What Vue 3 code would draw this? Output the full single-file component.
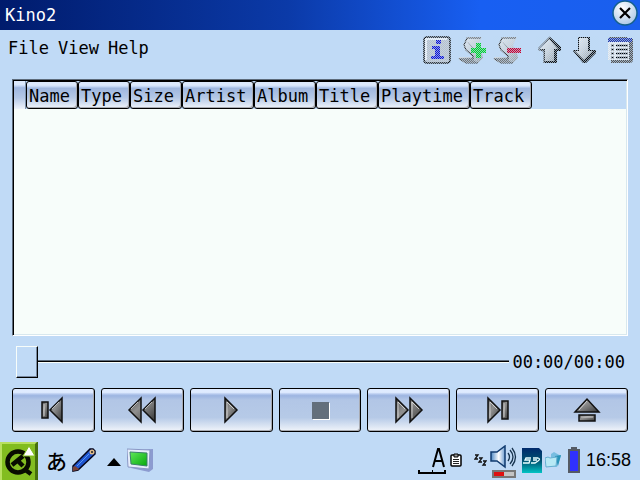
<script setup>
import { ref } from 'vue'

const menus = ['File', 'View', 'Help']
const columns = [
  { label: 'Name', size: 'short' },
  { label: 'Type', size: 'short' },
  { label: 'Size', size: 'short' },
  { label: 'Artist', size: 'long' },
  { label: 'Album', size: 'medium' },
  { label: 'Title', size: 'medium' },
  { label: 'Playtime', size: 'wide' },
  { label: 'Track', size: 'medium' }
]
const tools = [
  { id: 'info', label: 'Information' },
  { id: 'add', label: 'Add to playlist' },
  { id: 'remove', label: 'Remove from playlist' },
  { id: 'up', label: 'Move up' },
  { id: 'down', label: 'Move down' },
  { id: 'list', label: 'Playlist' }
]
const controls = [
  { id: 'prev', label: 'Previous' },
  { id: 'rewind', label: 'Rewind' },
  { id: 'play', label: 'Play' },
  { id: 'stop', label: 'Stop' },
  { id: 'forward', label: 'Fast forward' },
  { id: 'next', label: 'Next' },
  { id: 'eject', label: 'Eject' }
]
const position = ref(0)
</script>

<template>
  <div class="screen">
    <svg class="defs" width="0" height="0" aria-hidden="true">
      <defs>
        <pattern id="dither" width="2" height="2" patternUnits="userSpaceOnUse">
          <path d="M0 0h1v1h-1zM1 1h1v1h-1z" fill="#c0daf6" fill-opacity=".7" />
        </pattern>
        <linearGradient id="metal" x1="0" y1="0" x2="1" y2="1">
          <stop offset="0" stop-color="#555" />
          <stop offset=".4" stop-color="#909090" />
          <stop offset=".6" stop-color="#747474" />
          <stop offset="1" stop-color="#333" />
        </linearGradient>
        <linearGradient id="silver" x1="0" y1="0" x2="1" y2="1">
          <stop offset="0" stop-color="#f4f4f4" />
          <stop offset=".5" stop-color="#cfd2d4" />
          <stop offset="1" stop-color="#8e9294" />
        </linearGradient>
        <radialGradient id="orb" cx=".4" cy=".3" r=".75">
          <stop offset="0" stop-color="#fff" />
          <stop offset="1" stop-color="#a9c6e6" />
        </radialGradient>
        <linearGradient id="cone" x1="0" y1="0" x2="1" y2="0">
          <stop offset="0" stop-color="#4f8ac6" />
          <stop offset=".55" stop-color="#fff" />
          <stop offset="1" stop-color="#6c9cd0" />
        </linearGradient>
        <linearGradient id="card" x1="0" y1="0" x2="0" y2="1">
          <stop offset="0" stop-color="#002a6c" />
          <stop offset=".5" stop-color="#005070" />
          <stop offset=".7" stop-color="#007c90" />
          <stop offset="1" stop-color="#00c4c4" />
        </linearGradient>
        <linearGradient id="lawn" x1="0" y1="0" x2="1" y2="1">
          <stop offset="0" stop-color="#5fe85a" />
          <stop offset="1" stop-color="#06a80c" />
        </linearGradient>
      </defs>
    </svg>

    <header class="titlebar">
      <h1>Kino2</h1>
      <button class="close" aria-label="Close">
        <svg width="26" height="26" viewBox="0 0 26 26">
          <circle cx="13" cy="13" r="12" fill="url(#orb)" stroke="#15608c" stroke-width="1.5" />
          <path d="M8 8l10 10M18 8L8 18" stroke="#000" stroke-width="2.2" />
        </svg>
      </button>
    </header>

    <div class="menubar">
      <nav class="menus">
        <button v-for="m in menus" :key="m">{{ m }}</button>
      </nav>
      <div class="tools">
        <button v-for="t in tools" :key="t.id" :class="t.id" :aria-label="t.label" disabled>
          <svg width="28" height="28" viewBox="0 0 28 28">
            <template v-if="t.id === 'info'">
              <rect x="1" y="1" width="26" height="26" rx="3" fill="#bcc0c6" stroke="#111" stroke-width="1.500" />
              <path d="M3 24V3h21" stroke="#f4f4f4" stroke-width="2" fill="none" />
              <path d="M13 4h5v4h-5zM9 10h8v10h4v3H8v-3h4v-7H9z" fill="#1010d0" />
            </template>
            <template v-else-if="t.id === 'add' || t.id === 'remove'">
              <path d="M9 1h15l-4 8 4 8 1 5-5 5H7l-6-3v-3h14L7 14 5 9z" fill="url(#silver)" />
              <path d="M23 2H9L6 9l2 5 7 6v3H2l6 4h12" fill="none" stroke="#333" stroke-width="1.200" />
              <path d="M2 23l13 1 3 2-4 1H8z" fill="#777" />
              <path d="M10 6l4 5 5 5" stroke="#999" fill="none" />
              <path v-if="t.id === 'add'" d="M18 7h5v5h5v5h-5v5h-5v-5h-5v-5h5z" fill="#00d028" />
              <path v-else d="M14 12h14v5H14z" fill="#c8002c" />
            </template>
            <template v-else-if="t.id === 'up'">
              <path d="M14 1l11 10v4h-4v12H8V16l-4-2 1-2z" fill="#111" />
              <path d="M13 3l9 10h-4v12H9V13H4z" fill="url(#silver)" />
              <path d="M14 1L3 12v2h5v13" fill="none" stroke="#555" stroke-width="1.200" />
            </template>
            <template v-else-if="t.id === 'down'">
              <path d="M7 1h12v13h6v3L15 27h-3L2 15v-1h5z" fill="#111" />
              <path d="M8 2h9v13h5l-9 9-9-9h4z" fill="url(#silver)" />
            </template>
            <template v-else>
              <path d="M3 1h18v2h6v22l-2 2H5v-3H2V5h1z" fill="#555" />
              <path d="M2 6h21v18H2z" fill="#eee" />
              <path d="M2 2h24v4H2z" fill="#2335a8" />
              <path d="M5 9.500h3M5 13.500h3M5 17.500h3M5 21.500h3M10 9.500h12M10 13.500h12M10 17.500h12M10 21.500h12" stroke="#000" stroke-width="1.500" />
            </template>
            <rect width="28" height="28" fill="url(#dither)" shape-rendering="crispEdges" />
          </svg>
        </button>
      </div>
    </div>

    <main>
      <div class="playlist">
        <table>
          <thead>
            <tr>
              <td class="mark"></td>
              <th v-for="c in columns" :key="c.label" :class="c.size" scope="col">{{ c.label }}</th>
            </tr>
          </thead>
          <tbody></tbody>
        </table>
      </div>

      <div class="seek">
        <input v-model="position" type="range" min="0" max="100" aria-label="Position" />
        <output>00:00/00:00</output>
      </div>

      <div class="controls">
        <button v-for="c in controls" :key="c.id" :aria-label="c.label">
          <svg width="30" height="28" viewBox="0 0 30 28">
            <g fill="url(#metal)" stroke="#111" stroke-width="1.500">
              <template v-if="c.id === 'prev'">
                <rect x="4" y="6" width="6" height="16" />
                <path d="M24 2v24L12 14z" />
              </template>
              <template v-else-if="c.id === 'rewind'">
                <path d="M14 2v24L2 14zM28 2v24L16 14z" />
              </template>
              <path v-else-if="c.id === 'play'" d="M9 2v24l12-12z" />
              <g v-else-if="c.id === 'stop'" stroke="none" shape-rendering="crispEdges">
                <path d="M8 7h17v17H8z" fill="#fff" />
                <path d="M7 6h17v17H7z" fill="#636f7c" />
              </g>
              <template v-else-if="c.id === 'forward'">
                <path d="M2 2v24l12-12zM16 2v24l12-12z" />
              </template>
              <template v-else-if="c.id === 'next'">
                <path d="M5 2v24l12-12z" />
                <rect x="19" y="5" width="6" height="18" />
              </template>
              <template v-else>
                <path d="M3 16L15 3l12 13z" />
                <rect x="7" y="19" width="16" height="6" />
              </template>
            </g>
            <g stroke="#eee" stroke-opacity=".7" fill="none">
              <path v-if="c.id === 'prev'" d="M6 20V8M14 13l7-7" />
              <path v-else-if="c.id === 'rewind'" d="M4 13l7-7M18 13l7-7" />
              <path v-else-if="c.id === 'play'" d="M11 22V6l7 7" />
              <path v-else-if="c.id === 'forward'" d="M4 22V6l7 7M18 22V6l7 7" />
              <path v-else-if="c.id === 'next'" d="M7 22V6l7 7M21 21V7" />
              <path v-else-if="c.id === 'eject'" d="M7 14l8-9M9 21h12" />
            </g>
          </svg>
        </button>
      </div>
    </main>

    <footer class="taskbar">
      <button class="launcher" aria-label="Applications">
        <svg width="38" height="38" viewBox="0 0 38 38">
          <path d="M0 0h38v38H0z" fill="#47710c" />
          <path d="M0 0h37L35 2H2v36H0z" fill="#b8e060" />
          <path d="M2 2h33v36H2z" fill="#82bd20" />
          <circle cx="18" cy="20" r="10.500" fill="none" stroke="#080c00" stroke-width="4.500" />
          <path d="M12 23l11-9M17 18l6 6M24 27l7 5" fill="none" stroke="#080c00" stroke-width="4.500" />
          <path d="M29 4l6 10H23z" fill="#fff" stroke="#82bd20" />
        </svg>
      </button>
      <button class="kana" aria-label="Input mode あ">あ</button>
      <button class="pen" aria-label="Pen input">
        <svg width="24" height="24" viewBox="0 0 24 24">
          <path d="M1 23v-5L18 1h3l2 2v3L6 22z" fill="#1f55d0" stroke="#05051a" stroke-width="1.500" />
          <path d="M5 18L17 6" stroke="#5b98f4" />
          <path d="M1 23v-4l2-1 4 3-1 1z" fill="#7a4238" />
          <circle cx="20" cy="4" r="2.500" fill="#e0bb88" />
          <circle cx="20" cy="4" r="1" fill="#222" />
        </svg>
      </button>
      <button class="expand" aria-label="More input methods">
        <svg width="14" height="8" viewBox="0 0 14 8"><path d="M0 8l7-8 7 8z" fill="#000" /></svg>
      </button>
      <button class="desktop" aria-label="Kino2 window">
        <svg width="27" height="24" viewBox="0 0 27 24">
          <path d="M3 2l23-1v20l-4 3-18-4z" fill="#8c9bd0" />
          <path d="M0 1l23 1-1 19-21-2z" fill="#e6edfb" stroke="#8997c5" />
          <path d="M3 4l17 1v13L4 16z" fill="url(#lawn)" stroke="#397f69" />
        </svg>
      </button>

      <div class="tray">
        <svg class="caps" width="28" height="27" viewBox="0 0 28 27" role="img" aria-label="Keyboard state">
          <path d="M15 20l5-18h1l5 18M17 14h7" fill="none" stroke="#000" stroke-width="2" />
          <path d="M0 23h2v2h12v-2h1v2h11v-2h2v4H0z" fill="#000" shape-rendering="crispEdges" />
        </svg>
        <svg class="clip" width="12" height="14" viewBox="0 0 12 14" role="img" aria-label="Clipboard">
          <rect x="1" y="2" width="10" height="11" rx="1" fill="#fff" stroke="#000" stroke-width="1.500" />
          <path d="M4 1h4v3H4z" fill="#999" stroke="#000" />
          <path d="M3 6.500h6M3 8.500h6M3 10.500h6" stroke="#222" />
        </svg>
        <svg class="sleep" width="13" height="13" viewBox="0 0 13 13" role="img" aria-label="Standby">
          <path d="M1 1h3L1 5h3M5 4h3L5 8h3M9 7h3l-3 4h3" fill="none" stroke="#111" stroke-width="1.300" />
        </svg>
        <svg class="sound" width="28" height="34" viewBox="0 0 28 34" role="img" aria-label="Volume">
          <path d="M1 7h6l8-6v21l-8-6H1z" fill="url(#cone)" stroke="#123c70" stroke-width="1.500" />
          <path d="M18 8q3 4 0 8M20 5q6 7 0 14M22 3q7 9 0 18" fill="none" stroke="#17334e" stroke-width="1.300" />
          <path d="M2 25h24v8H2z" fill="#777" />
          <path d="M4 27h10v4H4z" fill="#df1010" />
          <path d="M14 27h10v4H14z" fill="#c4c4c4" />
        </svg>
        <svg class="sd" width="20" height="26" viewBox="0 0 20 26" role="img" aria-label="Memory card">
          <path d="M0 1h17l3 3v22H0z" fill="url(#card)" />
          <path d="M9 11H4l-1 2h5l-1 3H1M11 11h5q3 1 0 3l-3 2H9M11 13h4" fill="none" stroke="#e8ffff" stroke-width="1.300" />
        </svg>
        <svg class="files" width="17" height="16" viewBox="0 0 17 16" role="img" aria-label="Files">
          <path d="M6 2l3-2 7 4-4 11-6-1z" fill="#78bde0" />
          <path d="M10 4l6-1-3 11z" fill="#2993b8" />
          <path d="M0 6l3-1 2 1 7-1-1 9-10 1z" fill="#b7e9f5" stroke="#65afd1" />
        </svg>
        <svg class="battery" width="12" height="26" viewBox="0 0 12 26" shape-rendering="crispEdges" role="img" aria-label="Battery full">
          <path d="M3 0h6v2h3v24H0V2h3z" fill="#555b65" />
          <path d="M2 4h8v20H2z" fill="#3030ff" />
        </svg>
        <time>16:58</time>
      </div>
    </footer>
  </div>
</template>

<style>
body {
  background: #c0daf6;
}
</style>

<style scoped>
.screen {
  min-height: 100vh;
  display: flex;
  flex-direction: column;
  background: #c0daf6;
  color: #000;
  font: 17px/20px "DejaVu Sans Mono", monospace;
}
.defs {
  position: absolute;
}
svg {
  display: block;
}
button {
  margin: 0;
  padding: 0;
  border: 0;
  background: none;
  color: inherit;
  font: inherit;
}
.titlebar {
  height: 30px;
  padding: 0 2px 4px 5px;
  box-sizing: border-box;
  display: flex;
  align-items: center;
  justify-content: space-between;
  background: linear-gradient(90deg, #001b6c, #0b3aa8 45%, #185ff2 75%, #1a5fee);
  color: #fff;
}
h1 {
  margin: 4px 0 0;
  font: inherit;
}
.menubar {
  height: 49px;
  padding: 6px 6px 0 8px;
  box-sizing: border-box;
  display: flex;
  align-items: flex-start;
  justify-content: space-between;
}
.menus {
  display: flex;
  gap: 9px;
  padding-top: 2px;
}
.tools {
  display: flex;
  gap: 7px;
}
.tools .up {
  margin-left: 8px;
}
main {
  flex: 1;
  display: flex;
  flex-direction: column;
  padding: 0 12px;
}
.playlist {
  flex: 1;
  border: 1px solid #5d6b7b;
  border-right-color: #fff;
  border-bottom-color: #fff;
  box-shadow: inset 1px 1px #000, inset -1px -1px #d8e8ee;
  padding: 1px;
  background: #f7fdfa;
}
table {
  width: 100%;
  table-layout: fixed;
  border-collapse: separate;
  border-spacing: 0;
  background: #c0daf6;
}
thead tr::after {
  content: "";
  display: table-cell;
}
th,
.mark {
  height: 28px;
  box-sizing: border-box;
  padding: 2px 0 0 2px;
  background: linear-gradient(#dce9fc 0 12%, #c3d6f4 18%, #9fb7df 24%, #b4c8e6 60%, #eef3fa);
  text-align: left;
  font-weight: normal;
}
th {
  border: 1px solid #000;
  border-radius: 3px;
  box-shadow: inset -1px -1px #a8abb2;
}
.mark {
  width: 12px;
  border-right: 1px solid #7d93ad;
}
.short {
  width: 52px;
}
.medium {
  width: 62px;
}
.long {
  width: 72px;
}
.wide {
  width: 92px;
}
.seek {
  display: flex;
  align-items: center;
  gap: 3px;
  padding: 10px 3px 10px 4px;
}
input {
  appearance: none;
  flex: 1;
  min-width: 0;
  height: 32px;
  margin: 0;
  background: linear-gradient(transparent 14px, #5d6b7b 14px 15px, #000 15px 16px, #f7fdfa 16px 17px, transparent 17px);
}
input::-webkit-slider-thumb {
  appearance: none;
  width: 22px;
  height: 32px;
  box-sizing: border-box;
  background: #c0daf6;
  border: 1px solid #000;
  border-top-color: #f7fdfa;
  border-left-color: #f7fdfa;
  box-shadow: inset -1px -1px #7889a0;
}
.controls {
  display: grid;
  grid-template-columns: repeat(7, 1fr);
  gap: 6px;
}
.controls button {
  height: 44px;
  display: flex;
  align-items: center;
  justify-content: center;
  border: 1px solid #000;
  border-radius: 3px;
  background: linear-gradient(#dfebff 0 8%, #b7caee 12%, #9db5e1 16%, #b2c6e6 26%, #b6cae7 68%, #f0f4fa);
  box-shadow: inset -1px -1px #a8abb2;
}
.taskbar {
  height: 48px;
  padding-top: 8px;
  box-sizing: border-box;
  display: flex;
  align-items: center;
}
.taskbar .launcher {
  margin-top: 2px;
}
.kana {
  margin-left: 8px;
  font: 500 21px/24px "Noto Sans CJK JP", sans-serif;
}
.pen {
  margin-left: 5px;
}
.expand {
  margin: 4px 0 0 11px;
}
.desktop {
  margin-left: 6px;
}
.tray {
  margin-left: auto;
  padding-right: 9px;
  display: flex;
  align-items: center;
}
.clip {
  margin-left: 4px;
}
.sleep {
  margin-left: 12px;
}
.sound {
  margin: 4px 0 0 3px;
}
.sd {
  margin-left: 4px;
}
.files {
  margin-left: 3px;
}
.battery {
  margin: 0 6px;
}
time {
  font: 18px/24px "Liberation Sans", sans-serif;
}
</style>
